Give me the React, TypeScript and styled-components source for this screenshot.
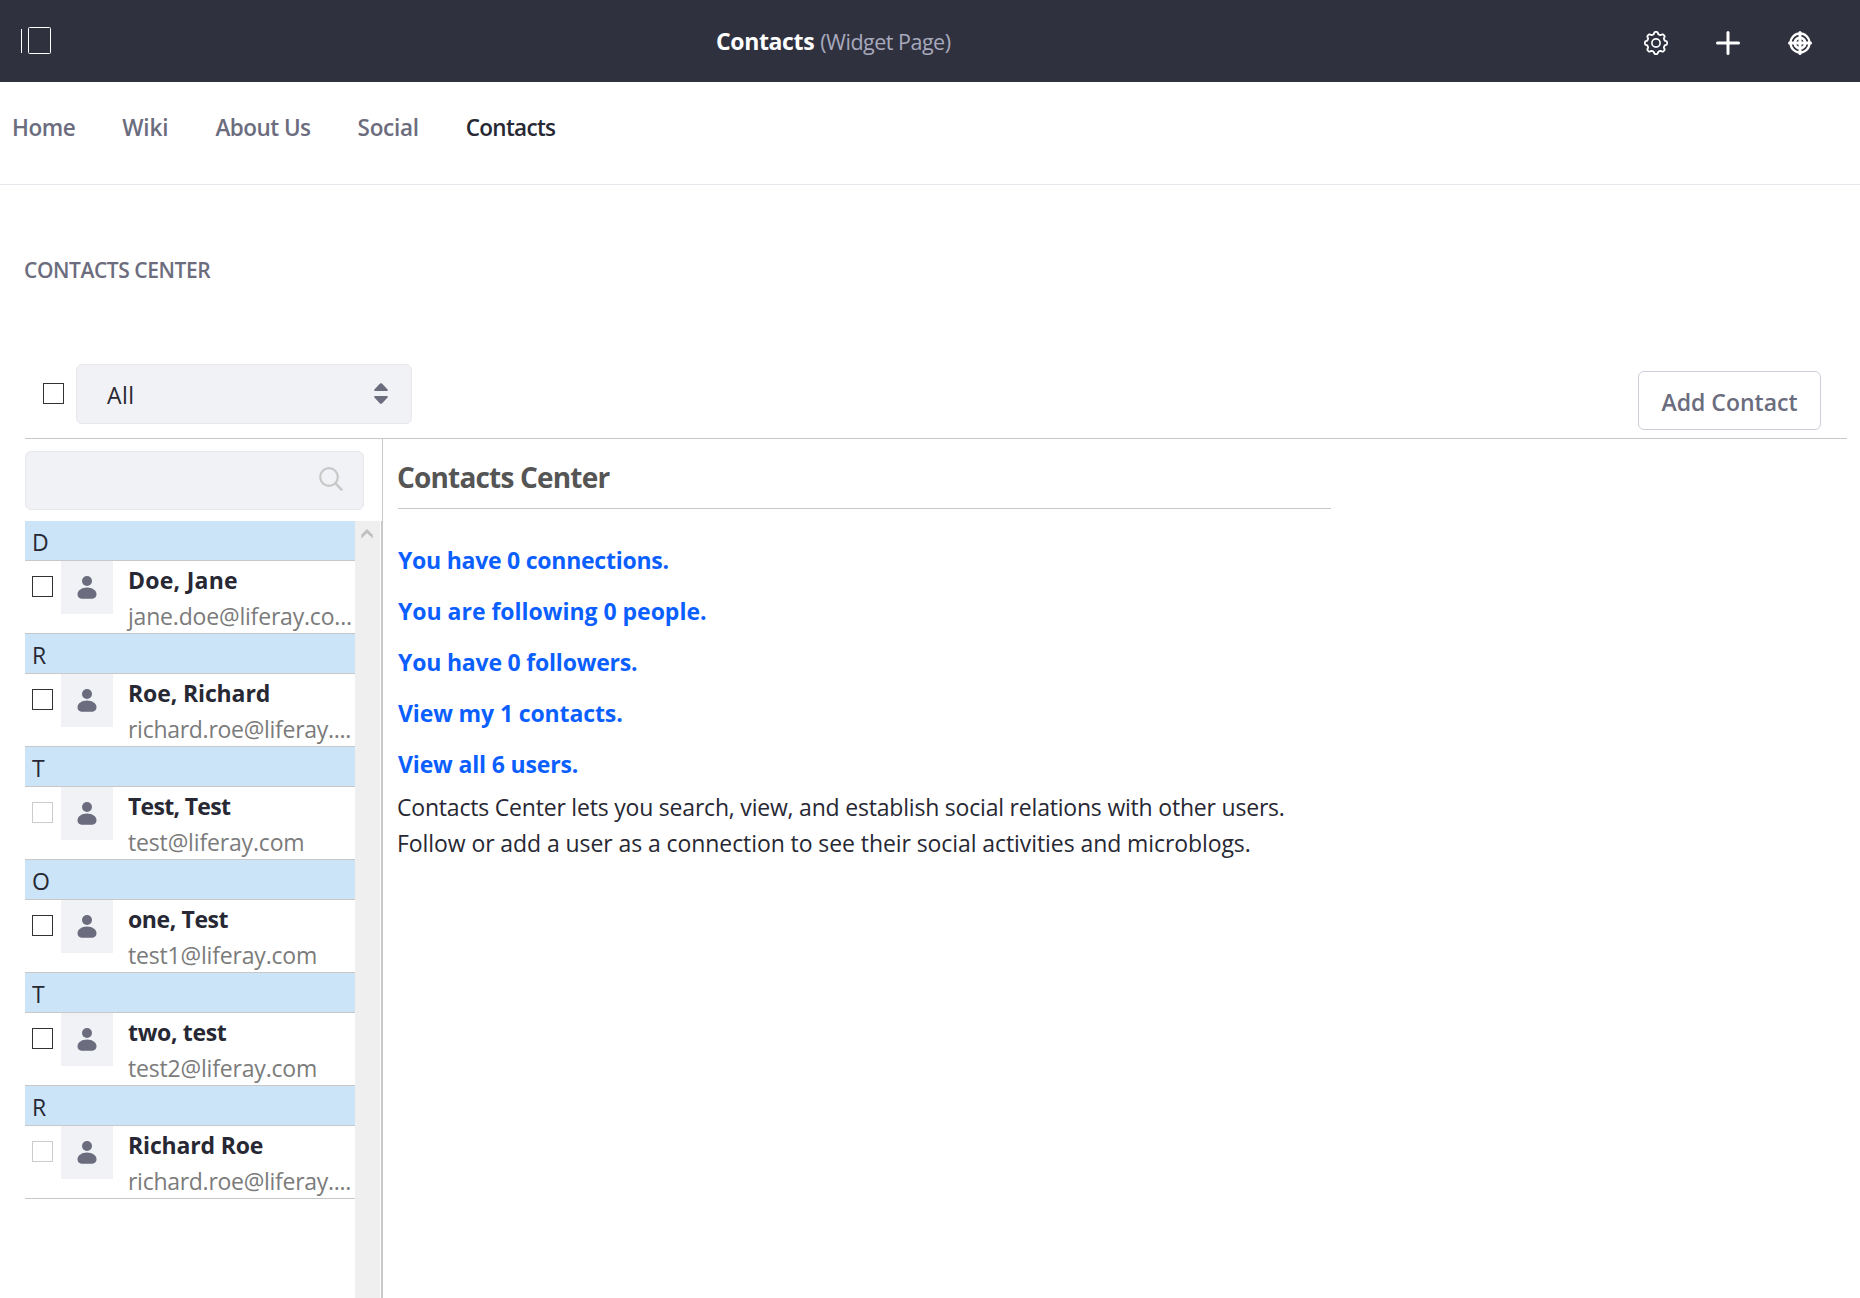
import React from "react";
import styled, { createGlobalStyle } from "styled-components";

const color = {
  bar: "#30313f",
  text: "#272833",
  muted: "#6b6c7e",
  line: "#c8c8c8",
  field: "#f1f2f5",
  fieldBorder: "#e7e7ed",
  link: "#0b5fff",
};

const GlobalStyle = createGlobalStyle`
  * { box-sizing: border-box; }
  body {
    margin: 0;
    background: #fff;
    color: ${color.text};
    font: 400 23px/36px "Open Sans", "Noto Sans", sans-serif;
  }
`;

const Page = styled.div`
  display: flex;
  flex-direction: column;
  width: 1860px;
  height: 1298px;
  overflow: hidden;
`;

const ControlBar = styled.header`
  display: grid;
  grid-template-columns: 715px 1fr auto;
  height: 82px;
  flex: none;
  background: ${color.bar};
  color: #fff;
`;

const PanelToggle = styled.div`
  padding: 27px 0 0 21px;
  svg { display: block; }
`;

const PageTitle = styled.div`
  display: flex;
  align-items: baseline;
  gap: 6px;
  padding: 23px 0 0 1px;
  white-space: nowrap;
`;

const PageName = styled.span`
  font-weight: 700;
  letter-spacing: -0.36px;
`;

const PageKind = styled.span`
  font-size: 21.5px;
  letter-spacing: -0.5px;
  color: #a7a9bc;
`;

const BarActions = styled.div`
  display: flex;
  gap: 48px;
  padding: 31px 48px 0 0;
  svg { display: block; }
`;

const Nav = styled.nav`
  display: flex;
  gap: 47px;
  height: 103px;
  flex: none;
  padding: 28px 12px 0;
  border-bottom: 1px solid ${color.fieldBorder};
`;

const NavItem = styled.a<{ $active?: boolean; $track: number }>`
  font-size: 22.5px;
  font-weight: 600;
  letter-spacing: ${(p) => p.$track}px;
  white-space: nowrap;
  color: ${(p) => (p.$active ? color.text : color.muted)};
`;

const Portlet = styled.main`
  display: flex;
  flex-direction: column;
  flex: 1;
  min-height: 0;
  padding: 67px 13px 0 25px;
`;

const PortletTitle = styled.h2`
  margin: 0 0 0 -1px;
  height: 112px;
  font-size: 21px;
  font-weight: 600;
  letter-spacing: -0.43px;
  color: ${color.muted};
`;

const Toolbar = styled.div`
  display: flex;
  align-items: flex-start;
  flex: none;
  height: 75px;
  border-bottom: 1px solid ${color.line};
`;

const Checkbox = styled.span<{ $disabled?: boolean }>`
  flex: none;
  width: 21px;
  height: 21px;
  border: 1px solid ${(p) => (p.$disabled ? "#cccccc" : "#333333")};
  background: #fff;
`;

const SelectAll = styled.div`
  display: flex;
  padding: 19px 12px 0 18px;
`;

const Select = styled.div`
  display: flex;
  justify-content: space-between;
  width: 336px;
  height: 60px;
  padding: 12px 23px 0 30px;
  border: 1px solid ${color.fieldBorder};
  border-radius: 6px;
  background: ${color.field};
  letter-spacing: 0.4px;
  svg { margin-top: 6px; }
`;

const AddButton = styled.button`
  width: 183px;
  height: 59px;
  margin: 7px 26px 0 auto;
  padding: 2px 0 0;
  border: 1px solid #cdced9;
  border-radius: 6px;
  background: #fff;
  font: 600 23px/36px "Open Sans", "Noto Sans", sans-serif;
  color: ${color.muted};
`;

const Columns = styled.div`
  display: flex;
  flex: 1;
  min-height: 0;
`;

const Sidebar = styled.aside`
  display: flex;
  flex-direction: column;
  width: 358px;
  border-right: 1px solid ${color.line};
`;

const SearchBox = styled.div`
  display: flex;
  justify-content: flex-end;
  flex: none;
  width: 339px;
  height: 59px;
  margin: 12px 0 11px;
  padding: 15px 20px 0 0;
  border: 1px solid ${color.fieldBorder};
  border-radius: 6px;
  background: ${color.field};
`;

const Results = styled.div`
  display: flex;
  flex: 1;
  min-height: 0;
  border-right: 1px solid ${color.line};
`;

const List = styled.div`
  width: 330px;
`;

const Scrollbar = styled.div`
  flex: 1;
  padding: 7px 0 0 6px;
  background: #efefef;
  border-right: 1px solid #fff;
  svg { display: block; }
`;

const GroupHeader = styled.div`
  height: 40px;
  padding: 3px 0 0 7px;
  border-bottom: 1px solid ${color.line};
  background: #cce4f8;
`;

const ContactRow = styled.div`
  display: flex;
  height: 73px;
  padding-left: 7px;
  border-bottom: 1px solid ${color.line};
  ${Checkbox} { margin: 15px 8px 0 0; }
`;

const Avatar = styled.div`
  display: flex;
  justify-content: center;
  flex: none;
  width: 52px;
  height: 53px;
  padding-top: 15px;
  margin-right: 15px;
  background: ${color.field};
`;

const Person = styled.div`
  min-width: 0;
  padding-top: 1px;
  white-space: nowrap;
`;

const PersonName = styled.div<{ $track: number }>`
  font-weight: 700;
  letter-spacing: ${(p) => p.$track}px;
`;

const Email = styled.div<{ $track: number }>`
  letter-spacing: ${(p) => p.$track}px;
  color: #7b7b7b;
`;

const Summary = styled.section`
  width: 948px;
  padding: 18px 0 0 15px;
`;

const SummaryTitle = styled.h1`
  margin: 0 0 33px;
  height: 52px;
  border-bottom: 1px solid ${color.line};
  font-size: 28px;
  line-height: 40px;
  font-weight: 700;
  letter-spacing: -0.82px;
  text-indent: -1px;
  color: #555;
`;

const SummaryLink = styled.a<{ $track: number }>`
  display: block;
  height: 51px;
  font-weight: 700;
  letter-spacing: ${(p) => p.$track}px;
  color: ${color.link};
`;

const Intro = styled.p<{ $track: number }>`
  margin: 0 0 0 -1px;
  white-space: nowrap;
  letter-spacing: ${(p) => p.$track}px;
  ${SummaryLink} + & { margin-top: -8px; }
`;

const PanelIcon = () => (
  <svg width="30" height="27" fill="none" stroke="#fff">
    <path d="M.5 2v24" />
    <rect x="7.5" y=".5" width="22" height="26" rx="1" />
  </svg>
);

/* Eight-toothed gear outline, sampled around the circle. */
const gearPath =
  Array.from({ length: 144 }, (_, i) => {
    const a = (i / 144) * Math.PI * 2;
    const r = 10 + 1.1 * Math.tanh(2.4 * Math.cos(8 * a));
    return `${i ? "L" : "M"}${(12 + r * Math.cos(a)).toFixed(2)} ${(12 + r * Math.sin(a)).toFixed(2)}`;
  }).join("") + "Z";

const GearIcon = () => (
  <svg width="24" height="24" fill="none" stroke="#fff" strokeWidth="1.8" strokeLinejoin="round">
    <path d={gearPath} />
    <circle cx="12" cy="12" r="4.1" strokeWidth="1.6" />
  </svg>
);

const PlusIcon = () => (
  <svg width="24" height="24" stroke="#fff" strokeWidth="3" strokeLinecap="round">
    <path d="M12 1.5v21M1.5 12h21" />
  </svg>
);

const TargetIcon = () => (
  <svg width="24" height="24" fill="none" stroke="#fff" strokeLinecap="round">
    <circle cx="12" cy="12" r="9.5" strokeWidth="2.3" />
    <circle cx="12" cy="12" r="5.2" strokeWidth="2.8" />
    <path d="M12 1.5v21M1.5 12h21" strokeWidth="3" />
  </svg>
);

const CaretsIcon = () => (
  <svg width="14" height="21" fill={color.muted}>
    <path d="M6 .6q1-.9 2 0l5.6 5.8q.8 1.6-.8 1.6H1.2Q-.4 8 .4 6.4z" />
    <path d="M6 20.4q1 .9 2 0l5.6-5.8q.8-1.6-.8-1.6H1.2q-1.6 0-.8 1.6z" />
  </svg>
);

const SearchIcon = () => (
  <svg width="24" height="24" fill="none" stroke={color.line} strokeWidth="2.2">
    <circle cx="10" cy="10" r="8.8" />
    <path d="M16.2 16.2 23.2 23.2" strokeWidth="2.6" />
  </svg>
);

const ChevronUp = () => (
  <svg width="12" height="11" fill="#bfbfbf">
    <path d="M6 1l5.700 5.700v3.800L6 4.900.3 10.500V6.700z" />
  </svg>
);

const PersonIcon = () => (
  <svg width="20" height="24" fill={color.muted}>
    <circle cx="10" cy="5" r="5" />
    <path d="M10 11.500c5 0 9.500 2.800 9.500 6.700 0 3-2.300 4.500-5 4.500h-9C2.800 22.700.5 21.200.5 18.200c0-3.900 4.500-6.700 9.500-6.700z" />
  </svg>
);

const navItems = [
  { label: "Home", track: -0.48 },
  { label: "Wiki", track: -0.1 },
  { label: "About Us", track: -0.53 },
  { label: "Social", track: -0.27 },
  { label: "Contacts", track: -0.72, active: true },
];

const contacts = [
  { group: "D", name: "Doe, Jane", email: "jane.doe@liferay.co...", track: 0.25, emailTrack: -0.19 },
  { group: "R", name: "Roe, Richard", email: "richard.roe@liferay....", track: -0.12, emailTrack: -0.28 },
  { group: "T", name: "Test, Test", email: "test@liferay.com", track: -0.7, emailTrack: -0.16, disabled: true },
  { group: "O", name: "one, Test", email: "test1@liferay.com", track: -0.4, emailTrack: -0.18 },
  { group: "T", name: "two, test", email: "test2@liferay.com", track: -0.33, emailTrack: -0.18 },
  { group: "R", name: "Richard Roe", email: "richard.roe@liferay....", track: -0.16, emailTrack: -0.28, disabled: true },
];

const links = [
  { label: "You have 0 connections.", track: -0.25 },
  { label: "You are following 0 people.", track: -0.02 },
  { label: "You have 0 followers.", track: -0.2 },
  { label: "View my 1 contacts.", track: -0.12 },
  { label: "View all 6 users.", track: -0.15 },
];

export default function App() {
  return (
    <Page>
      <GlobalStyle />
      <ControlBar>
        <PanelToggle><PanelIcon /></PanelToggle>
        <PageTitle>
          <PageName>Contacts</PageName>
          <PageKind>(Widget Page)</PageKind>
        </PageTitle>
        <BarActions>
          <GearIcon />
          <PlusIcon />
          <TargetIcon />
        </BarActions>
      </ControlBar>
      <Nav>
        {navItems.map((n) => (
          <NavItem key={n.label} $active={n.active} $track={n.track}>{n.label}</NavItem>
        ))}
      </Nav>
      <Portlet>
        <PortletTitle>CONTACTS CENTER</PortletTitle>
        <Toolbar>
          <SelectAll><Checkbox /></SelectAll>
          <Select>All<CaretsIcon /></Select>
          <AddButton>Add Contact</AddButton>
        </Toolbar>
        <Columns>
          <Sidebar>
            <SearchBox><SearchIcon /></SearchBox>
            <Results>
              <List>
                {contacts.map((c, i) => (
                  <React.Fragment key={i}>
                    <GroupHeader>{c.group}</GroupHeader>
                    <ContactRow>
                      <Checkbox $disabled={c.disabled} />
                      <Avatar><PersonIcon /></Avatar>
                      <Person>
                        <PersonName $track={c.track}>{c.name}</PersonName>
                        <Email $track={c.emailTrack}>{c.email}</Email>
                      </Person>
                    </ContactRow>
                  </React.Fragment>
                ))}
              </List>
              <Scrollbar><ChevronUp /></Scrollbar>
            </Results>
          </Sidebar>
          <Summary>
            <SummaryTitle>Contacts Center</SummaryTitle>
            {links.map((l) => (
              <SummaryLink key={l.label} $track={l.track}>{l.label}</SummaryLink>
            ))}
            <Intro $track={-0.2}>Contacts Center lets you search, view, and establish social relations with other users.</Intro>
            <Intro $track={-0.08}>Follow or add a user as a connection to see their social activities and microblogs.</Intro>
          </Summary>
        </Columns>
      </Portlet>
    </Page>
  );
}
